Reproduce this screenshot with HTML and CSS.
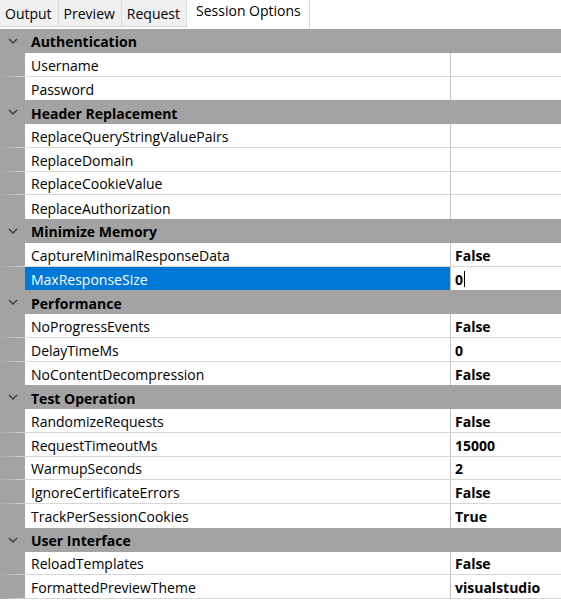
FILE: index.html
```html
<!DOCTYPE html>
<html>
<head>
<meta charset="utf-8">
<link rel="stylesheet" href="styles.css">
</head>
<body>
<div class="tabs">
  <div class="tab">Output</div>
  <div class="tab">Preview</div>
  <div class="tab">Request</div>
  <div class="tab active">Session Options</div>
</div>
<div class="grid">
  <div class="cat"><span class="chev"><svg width="10" height="6" viewBox="0 0 10 6"><path d="M1 1 L5 5 L9 1" fill="none" stroke="#3c3c3c" stroke-width="1.4"/></svg></span><span class="cat-name">Authentication</span></div>
  <div class="prop"><div class="name">Username</div><div class="val"></div></div>
  <div class="prop last"><div class="name">Password</div><div class="val"></div></div>

  <div class="cat"><span class="chev"><svg width="10" height="6" viewBox="0 0 10 6"><path d="M1 1 L5 5 L9 1" fill="none" stroke="#3c3c3c" stroke-width="1.4"/></svg></span><span class="cat-name">Header Replacement</span></div>
  <div class="prop"><div class="name">ReplaceQueryStringValuePairs</div><div class="val"></div></div>
  <div class="prop"><div class="name">ReplaceDomain</div><div class="val"></div></div>
  <div class="prop"><div class="name">ReplaceCookieValue</div><div class="val"></div></div>
  <div class="prop last"><div class="name">ReplaceAuthorization</div><div class="val"></div></div>

  <div class="cat"><span class="chev"><svg width="10" height="6" viewBox="0 0 10 6"><path d="M1 1 L5 5 L9 1" fill="none" stroke="#3c3c3c" stroke-width="1.4"/></svg></span><span class="cat-name">Minimize Memory</span></div>
  <div class="prop"><div class="name">CaptureMinimalResponseData</div><div class="val">False</div></div>
  <div class="prop last selected"><div class="name">MaxResponseSize</div><div class="val">0<span class="caret"></span></div></div>

  <div class="cat"><span class="chev"><svg width="10" height="6" viewBox="0 0 10 6"><path d="M1 1 L5 5 L9 1" fill="none" stroke="#3c3c3c" stroke-width="1.4"/></svg></span><span class="cat-name">Performance</span></div>
  <div class="prop"><div class="name">NoProgressEvents</div><div class="val">False</div></div>
  <div class="prop"><div class="name">DelayTimeMs</div><div class="val">0</div></div>
  <div class="prop last"><div class="name">NoContentDecompression</div><div class="val">False</div></div>

  <div class="cat"><span class="chev"><svg width="10" height="6" viewBox="0 0 10 6"><path d="M1 1 L5 5 L9 1" fill="none" stroke="#3c3c3c" stroke-width="1.4"/></svg></span><span class="cat-name">Test Operation</span></div>
  <div class="prop"><div class="name">RandomizeRequests</div><div class="val">False</div></div>
  <div class="prop"><div class="name">RequestTimeoutMs</div><div class="val">15000</div></div>
  <div class="prop"><div class="name">WarmupSeconds</div><div class="val">2</div></div>
  <div class="prop"><div class="name">IgnoreCertificateErrors</div><div class="val">False</div></div>
  <div class="prop last"><div class="name">TrackPerSessionCookies</div><div class="val">True</div></div>

  <div class="cat"><span class="chev"><svg width="10" height="6" viewBox="0 0 10 6"><path d="M1 1 L5 5 L9 1" fill="none" stroke="#3c3c3c" stroke-width="1.4"/></svg></span><span class="cat-name">User Interface</span></div>
  <div class="prop"><div class="name">ReloadTemplates</div><div class="val">False</div></div>
  <div class="prop"><div class="name">FormattedPreviewTheme</div><div class="val">visualstudio</div></div>
</div>
</body>
</html>
```

FILE: styles.css
```css
html, body {
  margin: 0;
  padding: 0;
  background: #ffffff;
}
body {
  font-family: "Open Sans", "Noto Sans", sans-serif;
  font-size: 14px;
  color: #000;
  width: 561px;
  height: 601px;
  overflow: hidden;
}
.tabs {
  display: flex;
  height: 29px;
  background: #ffffff;
  box-sizing: border-box;
}
.tab {
  box-sizing: border-box;
  height: 27px;
  padding: 3px 6px 0 5px;
  background: #f0f0f0;
  border-right: 1px solid #d9d9d9;
  border-bottom: 1px solid #d9d9d9;
  line-height: 22px;
  font-size: 14px;
  color: #000;
}
.tab.active {
  background: #ffffff;
  height: 29px;
  padding: 0 8px 0 9px;
  border-right: 1px solid #d9d9d9;
  border-bottom: 0;
}
.grid {
  display: flex;
  flex-direction: column;
}
.cat {
  display: flex;
  align-items: center;
  height: 23.76px;
  padding-top: 2px;
  background: #a3a3a3;
  box-sizing: border-box;
}
.chev {
  width: 31px;
  display: flex;
  justify-content: center;
  padding-right: 6px;
  margin-top: -2px;
  box-sizing: border-box;
}
.chev svg { display: block; }
.cat-name {
  font-weight: bold;
  font-size: 14px;
}
.prop {
  display: flex;
  height: 23.76px;
  box-sizing: border-box;
  border-left: 25px solid #a3a3a3;
  background: #fff;
  border-bottom: 1px solid #d6d6d6;
}
.prop.last {
  border-bottom: 0;
}
.name {
  width: 426px;
  flex: none;
  padding-left: 6px;
  padding-top: 2px;
  box-sizing: border-box;
  border-right: 1px solid #c4c4c4;
  display: flex;
  align-items: center;
  white-space: nowrap;
}
.val {
  flex: 1;
  padding-left: 4px;
  padding-top: 2px;
  display: flex;
  align-items: center;
  font-weight: bold;
}
.selected .name {
  background: #0078d7;
  color: #fff;
}
.caret {
  display: inline-block;
  width: 1px;
  height: 16px;
  background: #000;
  margin-left: 1px;
}
```
